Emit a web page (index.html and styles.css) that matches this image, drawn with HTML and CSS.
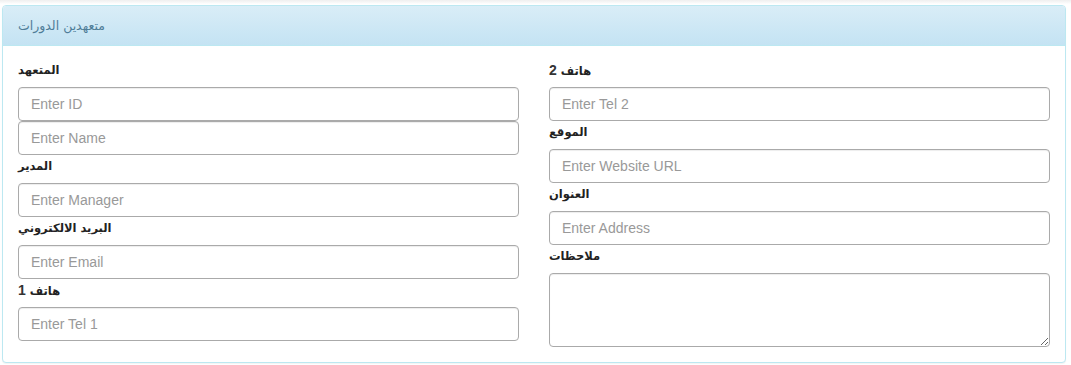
FILE: index.html
```html
<!DOCTYPE html>
<html lang="ar">
<head>
<meta charset="utf-8">
<title>متعهدين الدورات</title>
<link rel="stylesheet" href="styles.css">
</head>
<body>
<div class="panel">
  <div class="panel-heading"><span class="panel-title">متعهدين الدورات</span></div>
  <div class="panel-body">
    <div class="col">
      <label class="lbl">المتعهد</label>
      <input class="field" type="text" placeholder="Enter ID">
      <input class="field" type="text" placeholder="Enter Name">
      <label class="lbl">المدير</label>
      <input class="field" type="text" placeholder="Enter Manager">
      <label class="lbl">البريد الالكتروني</label>
      <input class="field" type="text" placeholder="Enter Email">
      <label class="lbl">هاتف <span class="num">1</span></label>
      <input class="field" type="text" placeholder="Enter Tel 1">
    </div>
    <div class="col">
      <label class="lbl">هاتف <span class="num">2</span></label>
      <input class="field" type="text" placeholder="Enter Tel 2">
      <label class="lbl">الموقع</label>
      <input class="field" type="text" placeholder="Enter Website URL">
      <label class="lbl">العنوان</label>
      <input class="field" type="text" placeholder="Enter Address">
      <label class="lbl">ملاحظات</label>
      <textarea class="field area"></textarea>
    </div>
  </div>
</div>
</body>
</html>
```
FILE: styles.css
```css
html, body {
  margin: 0;
  background: #fff;
}
body {
  padding: 5px 5px 0 2px;
  font-family: "Liberation Sans", "DejaVu Sans", sans-serif;
  font-size: 14px;
  color: #333;
  background: linear-gradient(to bottom, #efefef 0, #fafafa 3px, #fff 4px) no-repeat;
  min-height: 365px;
  box-sizing: border-box;
}
.panel {
  border: 1px solid #bce8f1;
  border-radius: 4px;
  background: #fff;
  box-shadow: 0 1px 1px rgba(0, 0, 0, 0.05);
}
.panel-heading {
  height: 39px;
  padding: 0 15px;
  display: flex;
  align-items: center;
  background: linear-gradient(to bottom, #d9edf7 0, #c4e3f3 100%);
  border-bottom: 1px solid #bce8f1;
  border-radius: 3px 3px 0 0;
}
.panel-title {
  direction: rtl;
  color: #4f7d98;
  font-size: 12.5px;
  font-weight: normal;
  font-family: "DejaVu Sans", sans-serif;
}
.panel-body {
  padding: 13px 15px 15px;
  display: grid;
  grid-template-columns: 1fr 1fr;
  column-gap: 30px;
}
.col {
  display: flex;
  flex-direction: column;
}
.lbl {
  display: block;
  direction: rtl;
  text-align: left;
  height: 23px;
  line-height: 23px;
  margin-bottom: 5px;
  font-weight: bold;
  font-size: 11.5px;
  color: #222;
  font-family: "DejaVu Sans", sans-serif;
}
.num {
  font-family: "Liberation Sans", sans-serif;
  font-size: 14px;
  color: #333;
}
.field {
  display: block;
  box-sizing: border-box;
  width: 100%;
  height: 34px;
  margin: 0;
  padding: 6px 12px;
  font-family: "Liberation Sans", sans-serif;
  font-size: 14px;
  color: #555;
  background: #fff;
  border: 1px solid #aaa;
  border-radius: 4px;
  box-shadow: inset 0 1px 1px rgba(0, 0, 0, 0.075);
  outline: none;
}
.field::placeholder {
  color: #999;
}
.area {
  height: 74px;
  resize: vertical;
}
```
